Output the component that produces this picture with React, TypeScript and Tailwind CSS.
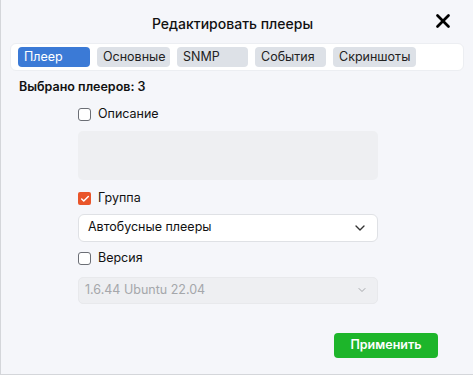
import { ChevronDown, X, Check } from 'lucide-react'

const tabs = [
  { label: 'Плеер', w: 'w-[72px]', active: true },
  { label: 'Основные', w: 'w-[73px]' },
  { label: 'SNMP', w: 'w-[71px]' },
  { label: 'События', w: 'w-[71px]' },
  { label: 'Скриншоты', w: 'w-[83px]' },
]

function Box({ checked }: { checked?: boolean }) {
  if (checked) {
    return (
      <span className="w-[13px] h-[13px] rounded-[2px] bg-[#e9552a] flex items-center justify-center">
        <Check size={10} strokeWidth={3.5} className="text-white" />
      </span>
    )
  }
  return <span className="w-[13px] h-[13px] rounded-[3px] border border-[#6b6e75] bg-white" />
}

export default function App() {
  return (
    <div className="w-[473px] h-[375px] bg-[#f5f6fa] border-l border-b border-[#d4d6da] text-[#111] font-['Inter','Noto_Sans',sans-serif] flex flex-col">
      {/* header */}
      <div className="relative h-[43px] flex items-center justify-center pt-[4px] pr-[9px]">
        <h1 className="text-[14px] font-medium">Редактировать плееры</h1>
        <button className="absolute right-[19px] top-[10px]">
          <X size={22} strokeWidth={3} className="text-black" />
        </button>
      </div>

      {/* tabs */}
      <div className="mx-[9px] h-[28px] bg-white rounded-[6px] border border-[#eceef2] flex items-center gap-[7px] pl-[7px]">
        {tabs.map((t) => (
          <div
            key={t.label}
            className={`${t.w} h-[20px] rounded-[4px] pl-[6px] flex items-center text-[12.5px] ${
              t.active ? 'bg-[#3b7ad6] text-white' : 'bg-[#dde1e7] text-[#222]'
            }`}
          >
            {t.label}
          </div>
        ))}
      </div>

      <div className="pl-[18px] pt-[7px] text-[12.5px] font-semibold">Выбрано плееров: 3</div>

      <div className="ml-[77px] w-[300px] flex flex-col mt-[8px] text-[12.5px]">
        <label className="flex items-center gap-[7px] h-[20px]">
          <Box />
          Описание
        </label>
        <div className="mt-[6px] h-[49px] bg-[#eeeff2] rounded-[5px]" />

        <label className="mt-[9px] flex items-center gap-[7px] h-[20px]">
          <Box checked />
          Группа
        </label>
        <div className="mt-[5px] h-[28px] bg-white rounded-[6px] border border-[#dfe1e5] flex items-center justify-between pl-[9px] pr-[9px]">
          Автобусные плееры
          <ChevronDown size={16} strokeWidth={2} className="text-[#333]" />
        </div>

        <label className="mt-[7px] flex items-center gap-[7px] h-[20px]">
          <Box />
          Версия
        </label>
        <div className="mt-[8px] h-[27px] bg-[#eeeff2] rounded-[5px] border border-[#e8e9ec] flex items-center justify-between pl-[6px] pr-[9px] text-[#a5a7ab]">
          1.6.44 Ubuntu 22.04
          <ChevronDown size={12} strokeWidth={2} className="text-[#a5a7ab]" />
        </div>
      </div>

      <div className="flex justify-end pr-[35px] mt-[29px]">
        <button className="w-[104px] h-[25px] rounded-[4px] bg-[#1db52a] text-white text-[12.5px] font-semibold">
          Применить
        </button>
      </div>
    </div>
  )
}
